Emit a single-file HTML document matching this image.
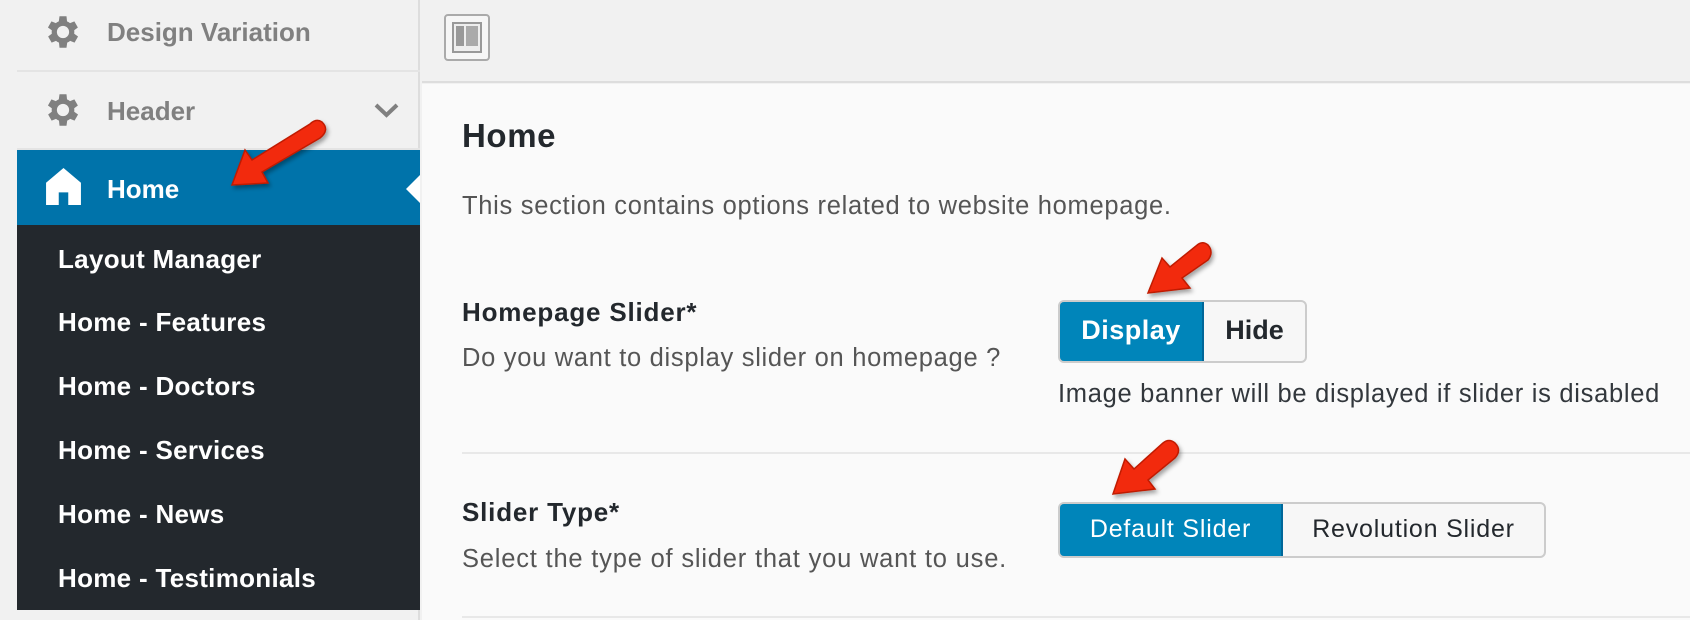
<!DOCTYPE html>
<html><head><meta charset="utf-8"><style>
*{margin:0;padding:0;box-sizing:border-box}
body{width:1690px;height:620px;overflow:hidden;background:#f1f1f1;font-family:"Liberation Sans",sans-serif;position:relative}
.abs{position:absolute;white-space:nowrap}
.side{position:absolute;left:17px;top:0;width:403px;height:620px;background:#f1f1f1;border-right:2px solid #ddd}
.dark{position:absolute;left:17px;top:225px;width:403px;height:385px;background:#23282d}
.home{position:absolute;left:17px;top:150px;width:403px;height:75px;background:#0073aa}
.gray{color:#808080;font-weight:bold;font-size:26px}
.sub{color:#fff;font-weight:bold;font-size:26px;letter-spacing:.3px;left:58px}
.main{position:absolute;left:422px;top:84px;width:1268px;height:536px;background:#fafafa}
.top{position:absolute;left:422px;top:0;width:1268px;height:83px;background:#f1f1f1;border-bottom:2px solid #ddd}
.h{color:#23282d;font-weight:bold}
.p{color:#555;font-size:25.5px;letter-spacing:.7px}
</style></head><body>
<div class="side"></div>
<div style="position:absolute;left:17px;top:70px;width:403px;height:2px;background:#e4e4e4"></div>
<div style="position:absolute;left:17px;top:148px;width:403px;height:2px;background:#e4e4e4"></div>
<svg class="abs" style="left:42px;top:11px" width="42" height="42" viewBox="0 0 24 24"><path fill="#808080" d="M19.4 13a7.5 7.5 0 0 0 0-2l2.1-1.6-2-3.5-2.5 1a7 7 0 0 0-1.7-1L15 3h-4l-.4 2.9a7 7 0 0 0-1.7 1l-2.5-1-2 3.5L6.6 11a7.5 7.5 0 0 0 0 2l-2.1 1.6 2 3.5 2.5-1a7 7 0 0 0 1.7 1L11 21h4l.4-2.9a7 7 0 0 0 1.7-1l2.5 1 2-3.5zM13 15.5a3.5 3.5 0 1 1 0-7 3.5 3.5 0 0 1 0 7z" transform="translate(-1 0)"/></svg>
<div class="abs gray" style="left:107px;top:17px">Design Variation</div>
<svg class="abs" style="left:42px;top:89px" width="42" height="42" viewBox="0 0 24 24"><path fill="#808080" d="M19.4 13a7.5 7.5 0 0 0 0-2l2.1-1.6-2-3.5-2.5 1a7 7 0 0 0-1.7-1L15 3h-4l-.4 2.9a7 7 0 0 0-1.7 1l-2.5-1-2 3.5L6.6 11a7.5 7.5 0 0 0 0 2l-2.1 1.6 2 3.5 2.5-1a7 7 0 0 0 1.7 1L11 21h4l.4-2.9a7 7 0 0 0 1.7-1l2.5 1 2-3.5zM13 15.5a3.5 3.5 0 1 1 0-7 3.5 3.5 0 0 1 0 7z" transform="translate(-1 0)"/></svg>
<div class="abs gray" style="left:107px;top:96px">Header</div>
<svg class="abs" style="left:374px;top:103px" width="25" height="15" viewBox="0 0 25 15"><path d="M2 2l10.5 10L23 2" stroke="#808080" stroke-width="4" fill="none"/></svg>
<div class="home"></div>
<svg class="abs" style="left:46px;top:168px" width="35" height="37" viewBox="0 0 33 35"><path fill="#fff" d="M16.5 0L0 14v21h12V23h9v12h12V14z"/></svg>
<div class="abs" style="left:107px;top:174px;color:#fff;font-weight:bold;font-size:26px">Home</div>
<svg class="abs" style="left:406px;top:175px" width="14" height="28"><path d="M14 0L0 14l14 14z" fill="#fff"/></svg>
<div class="dark"></div>
<div class="abs sub" style="top:244px">Layout Manager</div>
<div class="abs sub" style="top:307px">Home - Features</div>
<div class="abs sub" style="top:371px">Home - Doctors</div>
<div class="abs sub" style="top:435px">Home - Services</div>
<div class="abs sub" style="top:499px">Home - News</div>
<div class="abs sub" style="top:563px">Home - Testimonials</div>
<div class="top"></div>
<div class="abs" style="left:444px;top:14px;width:46px;height:47px;border:2px solid #aaa;border-radius:4px;background:#f6f6f6">
<div style="position:absolute;left:6px;top:6px;width:30px;height:31px;border:2px solid #999;background:#eee"><div style="position:absolute;left:2px;top:2px;width:8px;height:20px;background:#999"></div><div style="position:absolute;left:12px;top:2px;width:12px;height:20px;background:#aaa"></div></div></div>
<div class="main"></div>
<div class="abs h" style="left:462px;top:117px;font-size:33px;letter-spacing:.6px">Home</div>
<div class="abs p" style="left:462px;top:192px">This section contains options related to website homepage.</div>
<div class="abs h" style="left:462px;top:297px;font-size:26px;letter-spacing:.8px">Homepage Slider*</div>
<div class="abs p" style="left:462px;top:344px">Do you want to display slider on homepage ?</div>
<div class="abs" style="left:1058px;top:300px;width:249px;height:63px;border:2px solid #ccc;border-radius:6px;background:#f7f7f7;overflow:hidden">
<div style="position:absolute;left:-2px;top:-2px;width:146px;height:63px;background:#0085ba;border:2px solid #006799;border-radius:6px 0 0 6px;color:#fff;font-weight:bold;font-size:27px;letter-spacing:.5px;text-align:center;line-height:57px">Display</div>
<div style="position:absolute;left:144px;top:0;width:101px;line-height:57px;text-align:center;color:#23282d;font-weight:bold;font-size:27px">Hide</div></div>
<div class="abs" style="left:1058px;top:380px;font-size:25.5px;letter-spacing:.7px;color:#32373c">Image banner will be displayed if slider is disabled</div>
<div class="abs" style="left:462px;top:452px;width:1228px;height:2px;background:#e8e8e8"></div>
<div class="abs h" style="left:462px;top:497px;font-size:26px;letter-spacing:.8px">Slider Type*</div>
<div class="abs p" style="left:462px;top:545px;letter-spacing:.8px">Select the type of slider that you want to use.</div>
<div class="abs" style="left:1058px;top:502px;width:488px;height:56px;border:2px solid #ccc;border-radius:6px;background:#f7f7f7;overflow:hidden">
<div style="position:absolute;left:-2px;top:-2px;width:225px;height:56px;background:#0085ba;border:2px solid #006799;border-radius:6px 0 0 6px;color:#fff;font-size:25px;letter-spacing:.8px;text-align:center;line-height:50px">Default Slider</div>
<div style="position:absolute;left:223px;top:0;width:261px;line-height:50px;text-align:center;color:#23282d;font-size:25px;letter-spacing:.8px">Revolution Slider</div></div>
<div class="abs" style="left:462px;top:616px;width:1228px;height:2px;background:#e8e8e8"></div>
<svg class="abs" style="left:0;top:0" width="1690" height="620">
<defs><filter id="s"><feDropShadow dx="2" dy="3" stdDeviation="2" flood-opacity=".35"/></filter></defs>
<g fill="#f22a10" stroke="#c01a05" stroke-width="1.5" filter="url(#s)">
<path d="M322 122 Q330 130 320 138 L262 172 L268 183 L232 185 L245 150 L252 160 L310 124 Q316 118 322 122Z"/>
<path d="M1208 245 Q1214 252 1208 260 L1182 278 L1190 288 L1148 293 L1162 258 L1170 267 L1196 246 Q1202 240 1208 245Z"/>
<path d="M1175 443 Q1182 450 1175 458 L1148 480 L1155 489 L1113 494 L1125 459 L1134 469 L1163 443 Q1169 438 1175 443Z"/>
</g></svg>
</body></html>
